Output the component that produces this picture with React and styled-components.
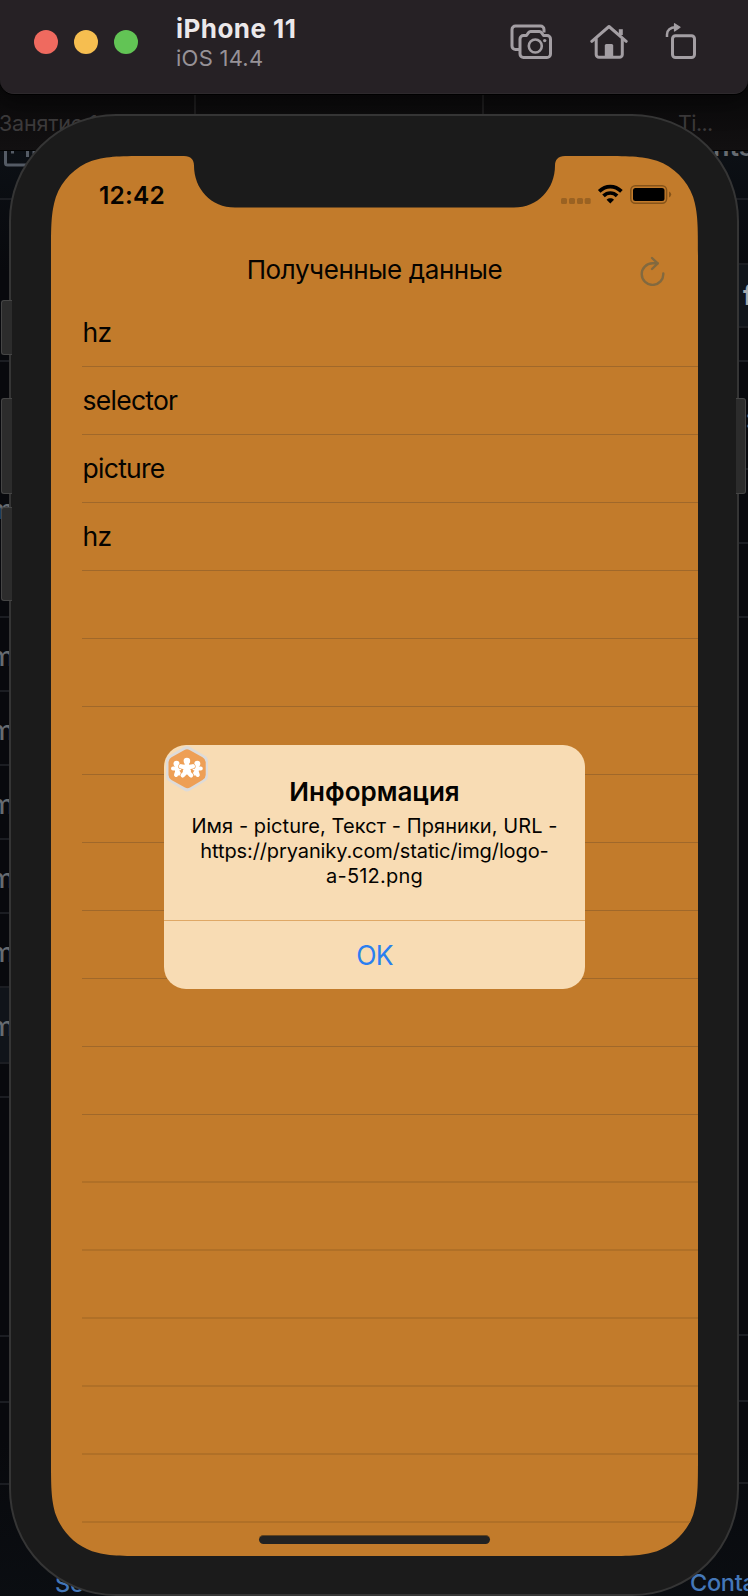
import React from "react";
import styled, { createGlobalStyle } from "styled-components";

const Global = createGlobalStyle`
  *, *::before, *::after { box-sizing: border-box; }
  html, body { margin: 0; background: #0a0c10; }
  body { font-family: Inter, "Noto Sans", sans-serif; -webkit-font-smoothing: antialiased; overflow: hidden; }
`;

const Desktop = styled.main`
  position: relative;
  width: 748px;
  height: 1596px;
  overflow: hidden;
  background: #0a0c10;
`;

/* ---------- window behind the simulator ---------- */

const Browser = styled.div`
  position: absolute;
  inset: 0;
  display: flex;
  flex-direction: column;
`;

const TabStrip = styled.div`
  display: flex;
  flex: none;
  height: 151px;
  padding-top: 80px;
  background: linear-gradient(#080808, #0c0b0c 70%, #121011);
  border-bottom: 1px solid #020202;
`;

const Tab = styled.div`
  width: ${(p) => p.$w}px;
  padding: 29px 0 0 ${(p) => p.$pad}px;
  border-right: ${(p) => (p.$last ? 0 : 2)}px solid #1d1c1d;
  color: #3d3b3c;
  font-size: 21.5px;
  line-height: 28px;
  letter-spacing: ${(p) => (p.$last ? -0.6 : -0.2)}px;
  white-space: nowrap;
`;

const PageColumns = styled.div`
  display: flex;
  justify-content: space-between;
  flex: 1;
  background: linear-gradient(#0c1015, #08090d 120px, #08090d 1290px, #0b0e12);
`;

const PageColumn = styled.div`
  width: ${(p) => p.$w}px;
  overflow: hidden;
`;

const PageRow = styled.div`
  height: ${(p) => p.$h}px;
  overflow: hidden;
  border-bottom: 2px solid #1b1d22;
  background: ${(p) => (p.$lit ? "#10141a" : "transparent")};
  padding: ${(p) => p.$pad || "0"};
  color: ${(p) => p.$color || "#666b71"};
  font-size: 27px;
  font-weight: ${(p) => p.$weight || 450};
  line-height: 32px;
  white-space: nowrap;
`;

const leftRows = [
  { h: 49, icon: true },
  { h: 162 },
  { h: 256, text: "m", pad: "132px 0 0" },
  { h: 74, text: "m" },
  { h: 74, text: "m" },
  { h: 74, text: "m" },
  { h: 74, text: "m" },
  { h: 74, text: "m" },
  { h: 76, text: "m", lit: true },
  { h: 34 },
  { h: 239 },
  { h: 66 },
  { h: 82 },
  { h: 120, text: "Se", link: true, inset: 55 },
];

const rightRows = [
  { h: 49, text: "nts", pad: "0 0 0 25px", weight: 600, lift: true },
  { h: 65 },
  { h: 63, text: "f", lit: true, pad: "15px 0 0 55px", weight: 700, color: "#a5a9ad" },
  { h: 34 },
  { h: 108, text: ":", pad: "41px 0 0 57px" },
  { h: 74 },
  { h: 74 },
  { h: 718 },
  { h: 66 },
  { h: 82 },
  { h: 120, text: "Conta", link: true, inset: 2 },
];

const Nudge = styled.span`
  display: block;
  margin-left: ${(p) => p.$x || 0}px;
  margin-top: ${(p) => p.$y || 0}px;
`;

const FooterLink = styled.a`
  display: block;
  padding-top: 85px;
  margin-left: ${(p) => p.$x}px;
  color: #4477b8;
  font-size: 23.5px;
  line-height: 28px;
  letter-spacing: -0.3px;
`;

const BoxIcon = () => (
  <svg width="40" height="20" viewBox="0 0 40 20" fill="none" stroke="#545b65" strokeWidth="3" display="block">
    <path d="M5.500 0V12a2 2 0 0 0 2 2H34" />
    <path d="M12.500 0V2.500M27.500 0V6M34 0V3" />
  </svg>
);

/* ---------- simulator title bar ---------- */

const TitleBar = styled.header`
  position: relative;
  display: flex;
  height: 94px;
  padding-left: 34px;
  background: #262125;
  border-bottom: 1px solid #2d292c;
  border-radius: 0 0 14px 14px;
  box-shadow: 0 1px 0 #000, 0 6px 26px rgba(0, 0, 0, 0.5);
`;

const Lights = styled.div`
  display: flex;
  gap: 16px;
  padding-top: 30px;
`;

const Light = styled.i`
  width: 24px;
  height: 24px;
  border-radius: 50%;
  background: ${(p) => p.$c};
`;

const Device = styled.div`
  width: 160px;
  margin-left: 38px;
  padding-top: 13px;
  white-space: nowrap;
`;

const DeviceName = styled.div`
  color: #ebe8ea;
  font-size: 26px;
  font-weight: 700;
  line-height: 31px;
  letter-spacing: 0.45px;
`;

const DeviceOs = styled.div`
  color: #979297;
  font-size: 22px;
  line-height: 28px;
  letter-spacing: 0.25px;
`;

const Tools = styled.div`
  display: flex;
  align-items: flex-start;
  gap: 37px;
  margin-left: 173.5px;
  padding-top: 22px;
`;

const toolProps = { fill: "none", stroke: "#a39ea3", strokeWidth: 3, strokeLinejoin: "round", display: "block" };

const CameraIcon = () => (
  <svg width="43" height="38" viewBox="0 0 43 38" {...toolProps}>
    <path d="M34 10.500V7.500a3.500 3.500 0 0 0-3.500-3.500H5.500A3.500 3.500 0 0 0 2 7.500V24a3.500 3.500 0 0 0 3.500 3.500H10" />
    <path d="M13.500 13.500h3l2-2.800c.6-.8 1-1.200 2-1.200h9c1 0 1.400.4 2 1.200l2 2.800h3.500a3.500 3.500 0 0 1 3.500 3.500v15a3.500 3.500 0 0 1-3.500 3.500H13.500A3.500 3.500 0 0 1 10 32V17a3.500 3.500 0 0 1 3.500-3.500z" />
    <circle cx="25.300" cy="24" r="6.500" strokeWidth="2.600" />
    <circle cx="34.700" cy="18.600" r="1.700" fill="#a39ea3" stroke="none" />
  </svg>
);

const HomeIcon = () => (
  <svg width="38" height="38" viewBox="0 0 38 38" {...toolProps} strokeLinecap="round">
    <path d="M1.800 19.300 19 4.500l17.200 14.800" />
    <path d="M6.200 17v15.500A2.800 2.800 0 0 0 9 35.300h20.500a2.800 2.800 0 0 0 2.800-2.800V17" />
    <path d="M30.800 13V7.200" strokeWidth="4" strokeLinecap="butt" />
    <path d="M14.800 35V23.500q0-1.500 1.500-1.500h5.400q1.500 0 1.500 1.500V35z" fill="#a39ea3" stroke="none" />
  </svg>
);

const RotateIcon = () => (
  <svg width="32" height="38" viewBox="0 0 32 38" {...toolProps}>
    <rect x="7.500" y="13.700" width="22" height="21.800" rx="3" />
    <path d="M2 15V12.500C2 8 5.500 5.300 10.500 5.300" strokeWidth="2.500" />
    <path d="M9.500 1.700 15 5.300 9.500 9z" fill="#a39ea3" strokeWidth="1.200" />
  </svg>
);

/* ---------- phone body ---------- */

const SideButton = styled.div`
  position: absolute;
  top: ${(p) => p.$y}px;
  ${(p) => (p.$right ? "left: 736px;" : "left: 1px;")}
  width: ${(p) => (p.$right ? 10 : 11)}px;
  height: ${(p) => p.$h}px;
  border: 1px solid #454545;
  border-${(p) => (p.$right ? "left" : "right")}: 0;
  border-radius: ${(p) => (p.$right ? "0 3px 3px 0" : "3px 0 0 3px")};
  background: #2c2c2c;
`;

const Phone = styled.section`
  position: absolute;
  left: 9px;
  top: 114px;
  width: 730px;
  height: 1482px;
  border: 2px solid #353535;
  padding: 40px 39px 38px 40px;
  border-radius: 107px;
  background: #1b1b1b;
`;

/* Outline of the display: continuous corners plus the sensor notch. */
const W = 647;
const H = 1400;
const R = 65;
const corner = (map) => {
  const p = (a, b) => map(a * R, b * R).map((n) => n.toFixed(2)).join(" ");
  return [
    `L${p(1.5287, 0)}C${p(1.0885, 0)} ${p(0.8684, 0)} ${p(0.6315, 0.0749)}`,
    `C${p(0.3728, 0.1691)} ${p(0.1691, 0.3728)} ${p(0.0749, 0.6315)}`,
    `C${p(0, 0.8684)} ${p(0, 1.0885)} ${p(0, 1.5287)}`,
  ].join("");
};
const screenPath =
  "M300 51.5H184C160 51.500 143 33 143 9.500C143 4 140 0 133 0" +
  corner((a, b) => [a, b]) +
  corner((a, b) => [b, H - a]) +
  corner((a, b) => [W - a, H - b]) +
  corner((a, b) => [W - b, a]) +
  "L514 0C507 0 504 4 504 9.500C504 33 487 51.500 463 51.500Z";

const Screen = styled.div`
  position: relative;
  display: flex;
  flex-direction: column;
  width: ${W}px;
  height: ${H}px;
  background: #c27b2b;
  clip-path: path("${(p) => p.$path}");
  color: #050300;
`;

const StatusBar = styled.div`
  display: flex;
  justify-content: space-between;
  height: 80px;
  padding: 23px 25px 0 48px;
`;

const Clock = styled.time`
  font-size: 24.5px;
  font-weight: 600;
  line-height: 32px;
  letter-spacing: 0.2px;
`;

const SignalGroup = styled.div`
  padding-top: 4px;
`;

const StatusIcons = () => (
  <svg width="112" height="24" viewBox="0 0 112 24" display="block">
    <g fill="#9a6222">
      <rect x="0" y="15" width="6" height="6" rx="1.500" />
      <rect x="8" y="15" width="6" height="6" rx="1.500" />
      <rect x="16" y="15" width="6" height="6" rx="1.500" />
      <rect x="23.700" y="15" width="6" height="6" rx="1.500" />
    </g>
    <g fill="none" stroke="#000" strokeWidth="3.700">
      <path d="M38.200 8.400C44.800 2 53.800 2 60.400 8.400" />
      <path d="M42.500 12.900C46.500 9 52.100 9 56.100 12.900" />
    </g>
    <path d="M49.300 20.600 45.600 16.700C47.700 14.800 50.900 14.800 53 16.700z" fill="#000" />
    <rect x="69.800" y="2.800" width="35.800" height="17.400" rx="4.500" fill="none" stroke="#855319" strokeWidth="1.500" />
    <rect x="72" y="5" width="31.500" height="13" rx="2.500" fill="#000" />
    <path d="M108 8.500q2.200.8 2.200 3t-2.200 3z" fill="#855319" />
  </svg>
);

const NavBar = styled.div`
  position: relative;
  display: flex;
  justify-content: center;
  height: 63px;
  padding-top: 17px;
`;

const NavTitle = styled.h1`
  margin: 0;
  font-size: 26px;
  font-weight: 400;
  line-height: 34px;
  letter-spacing: -0.4px;
  white-space: nowrap;
`;

const Refresh = styled.button`
  position: absolute;
  right: 32px;
  top: 20px;
  padding: 0;
  border: 0;
  background: none;
`;

const RefreshIcon = () => (
  <svg width="26" height="30" viewBox="0 0 26 30" display="block" fill="none" stroke="#82693f" strokeWidth="2.400" strokeLinecap="round" strokeLinejoin="round">
    <path d="M23.300 17.500A10.800 10.800 0 1 1 12.500 7.300H17.500" />
    <path d="M12 2 17.700 7.400 12 13" />
  </svg>
);

const List = styled.ul`
  margin: 0;
  padding: 0 0 0 31px;
  list-style: none;
`;

const Row = styled.li`
  height: 68px;
  padding-top: 16px;
  padding-left: 0.6px;
  border-bottom: ${(p) => (p.$soft ? "2px solid #b07027" : "1px solid #a0682a")};
  font-size: 26.5px;
  line-height: 34px;
  letter-spacing: -0.75px;
`;

const HomeIndicator = styled.div`
  position: absolute;
  left: 208px;
  top: 1379px;
  width: 231px;
  height: 9px;
  border: 1px solid #62441f;
  border-width: 1px 0 0;
  border-radius: 4.500px;
  background: #222;
`;

/* ---------- alert ---------- */

const Alert = styled.div`
  position: absolute;
  left: 112.6px;
  top: 589px;
  display: flex;
  flex-direction: column;
  width: 421.8px;
  height: 244.3px;
  border-radius: 22px;
  background: #f8dcb4;
  text-align: center;
`;

const AlertBody = styled.div`
  height: 175px;
  padding-top: 30px;
`;

const AlertTitle = styled.h2`
  margin: 0;
  font-size: 26px;
  font-weight: 600;
  line-height: 34px;
`;

const AlertText = styled.p`
  margin: 5px 0 0;
  font-size: 20px;
  line-height: 25px;
  white-space: nowrap;
`;

const AlertLine = styled.span`
  display: block;
  letter-spacing: ${(p) => p.$ls || 0}px;
`;

const AlertAction = styled.button`
  flex: 1;
  padding: 0;
  border: 0;
  border-top: 1px solid #dfa866;
  border-radius: 0 0 22px 22px;
  background: none;
  color: #2a7ff0;
  font: 400 26.5px/34px Inter, sans-serif;
  letter-spacing: -0.8px;
`;

const Badge = styled.div`
  position: absolute;
  left: 0.8px;
  top: 0;
`;

const LogoIcon = () => (
  <svg width="46" height="48" viewBox="0 0 46 48" display="block">
    <path d="M20 2Q23 0 26 2L40.500 10.500Q44 12.500 44 16V31Q44 34.500 40.500 36.500L26 45.500Q23 47.300 20 45.500L5.500 36.500Q2 34.500 2 31V16Q2 12.500 5.500 10.500Z" fill="#dddbd9" />
    <path d="M20.500 5Q23 3.500 25.500 5L38.500 12.300Q41.700 14.200 41.700 17V30Q41.700 33 38.500 35L26 42.500Q23.500 44 21 42.500L7.500 35Q4.500 33 4.500 30V17Q4.500 14 7.500 12.300Z" fill="#ee9f55" />
    <g fill="#fff" stroke="#fff" strokeLinecap="round" strokeLinejoin="round">
      <circle cx="12.500" cy="18.800" r="3" stroke="none" />
      <circle cx="33.300" cy="18.800" r="3" stroke="none" />
      <path d="M9 23.500H15.500M13 21V27L12 30M14 27 15 28.500" strokeWidth="4" fill="none" />
      <path d="M36.800 23.500H30.300M32.800 21V27L33.800 30M31.800 27 30.800 28.500" strokeWidth="4" fill="none" />
    </g>
    <g fill="none" strokeLinecap="round" strokeLinejoin="round">
      <path d="M17 21.300 22.900 22.500 28.800 21.300M22.900 22V26L18.800 30.300M22.900 26 27 30.300" stroke="#ee9f55" strokeWidth="5.600" />
      <path d="M17 21.300 22.900 22.500 28.800 21.300M22.900 17V26L18.800 30.300M22.900 26 27 30.300" stroke="#fff" strokeWidth="4.400" />
      <path d="M22.900 20 20 26H25.800Z" fill="#fff" stroke="#fff" strokeWidth="2.500" />
    </g>
    <circle cx="22.900" cy="16" r="3.300" fill="#fff" />
  </svg>
);

const items = ["hz", "selector", "picture", "hz"];
const rows = Array.from({ length: 18 }, (_, i) => items[i] || "");

function BackgroundRow({ row }) {
  if (row.link) {
    return (
      <PageRow $h={row.h}>
        <FooterLink $x={row.inset}>{row.text}</FooterLink>
      </PageRow>
    );
  }
  if (row.icon) {
    return (
      <PageRow $h={row.h}>
        <BoxIcon />
      </PageRow>
    );
  }
  const isLeft = row.text === "m";
  return (
    <PageRow $h={row.h} $lit={row.lit} $weight={row.weight} $color={row.color} $pad={row.pad || "23px 0 0"}>
      {row.text && (
        <Nudge $x={isLeft ? -10 : 0} $y={row.lift ? -20 : 0}>
          {row.text}
        </Nudge>
      )}
    </PageRow>
  );
}

export default function App() {
  return (
    <Desktop>
      <Global />
      <Browser>
        <TabStrip>
          <Tab $w={196} $pad={0}>
            <Nudge $x={-1}>Занятие 1</Nudge>
          </Tab>
          <Tab $w={288} $pad={0} />
          <Tab $w={264} $pad={194} $last>Ti...</Tab>
        </TabStrip>
        <PageColumns>
          <PageColumn $w={200}>
            {leftRows.map((row, i) => (
              <BackgroundRow key={i} row={row} />
            ))}
          </PageColumn>
          <PageColumn $w={60}>
            {rightRows.map((row, i) => (
              <BackgroundRow key={i} row={row} />
            ))}
          </PageColumn>
        </PageColumns>
      </Browser>

      <TitleBar>
        <Lights>
          <Light $c="#ef6a5f" />
          <Light $c="#f6be50" />
          <Light $c="#62c455" />
        </Lights>
        <Device>
          <DeviceName>iPhone 11</DeviceName>
          <DeviceOs>iOS 14.4</DeviceOs>
        </Device>
        <Tools>
          <CameraIcon />
          <HomeIcon />
          <RotateIcon />
        </Tools>
      </TitleBar>

      <Phone>
        <Screen $path={screenPath}>
          <StatusBar>
            <Clock>12:42</Clock>
            <SignalGroup>
              <StatusIcons />
            </SignalGroup>
          </StatusBar>
          <NavBar>
            <NavTitle>Полученные данные</NavTitle>
            <Refresh aria-label="refresh">
              <RefreshIcon />
            </Refresh>
          </NavBar>
          <List>
            {rows.map((label, i) => (
              <Row key={i} $soft={i > 11}>
                {label}
              </Row>
            ))}
          </List>
          <HomeIndicator />
          <Alert role="dialog">
            <AlertBody>
              <AlertTitle>Информация</AlertTitle>
              <AlertText>
                <AlertLine $ls={0.07}>Имя - picture, Текст - Пряники, URL -</AlertLine>
                <AlertLine $ls={-0.11}>https://pryaniky.com/static/img/logo-</AlertLine>
                <AlertLine $ls={0.2}>a-512.png</AlertLine>
              </AlertText>
            </AlertBody>
            <AlertAction>OK</AlertAction>
            <Badge>
              <LogoIcon />
            </Badge>
          </Alert>
        </Screen>
      </Phone>

      <SideButton $y={300} $h={55} />
      <SideButton $y={398} $h={96} />
      <SideButton $y={507} $h={94} />
      <SideButton $right $y={398} $h={96} />
    </Desktop>
  );
}
